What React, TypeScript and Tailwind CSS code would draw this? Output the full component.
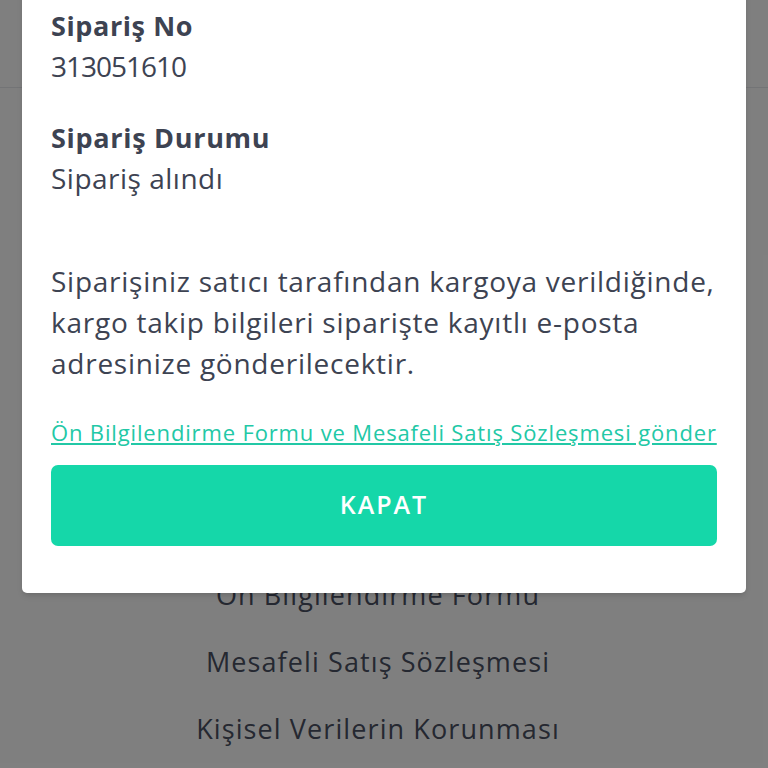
import React from "react";

const font = { fontFamily: '"Open Sans", "Noto Sans", "Liberation Sans", sans-serif' };

export default function App() {
  return (
    <div className="relative h-[768px] w-[768px] overflow-hidden bg-white" style={font}>
      {/* arka plandaki sayfa */}
      <div className="h-[88px] border-b border-[#e6e8ec]" />
      <div className="flex flex-col items-center pr-[12px] pt-[473px] text-[27px] tracking-[1.1px] text-[#4a5062]">
        <p className="leading-[67px]">Ön Bilgilendirme Formu</p>
        <p className="leading-[67px]">Mesafeli Satış Sözleşmesi</p>
        <p className="leading-[67px]">Kişisel Verilerin Korunması</p>
      </div>

      {/* karartma */}
      <div className="absolute inset-0 bg-black/50" />

      {/* modal */}
      <div className="absolute left-[22px] right-[22px] top-[-20px] rounded-[5px] bg-white px-[29px] pb-[47px] pt-[24.5px] shadow-md">
        <div className="text-[28px] leading-[41px] text-[#3d4352]">
          <p className="text-[27px] font-bold tracking-[0.6px]">Sipariş No</p>
          <p className="tracking-[-1px]">313051610</p>
          <p className="mt-[30px] text-[27px] font-bold tracking-[0.7px]">Sipariş Durumu</p>
          <p className="tracking-[0.5px]">Sipariş alındı</p>
          <p className="mt-[62px] whitespace-nowrap tracking-[0.75px]">
            Siparişiniz satıcı tarafından kargoya verildiğinde,
            <br />
            kargo takip bilgileri siparişte kayıtlı e-posta
            <br />
            adresinize gönderilecektir.
          </p>
        </div>
        <a
          href="#"
          className="mt-[34px] block whitespace-nowrap text-[22px] leading-[28px] tracking-[0.85px] text-[#22c8a6] underline underline-offset-2"
        >
          Ön Bilgilendirme Formu ve Mesafeli Satış Sözleşmesi gönder
        </a>
        <button
          type="button"
          className="mt-[19px] flex h-[81px] w-full items-center justify-center rounded-[7px] bg-[#15d7a9] text-[25px] font-semibold tracking-[2px] text-white"
        >
          KAPAT
        </button>
      </div>
    </div>
  );
}
